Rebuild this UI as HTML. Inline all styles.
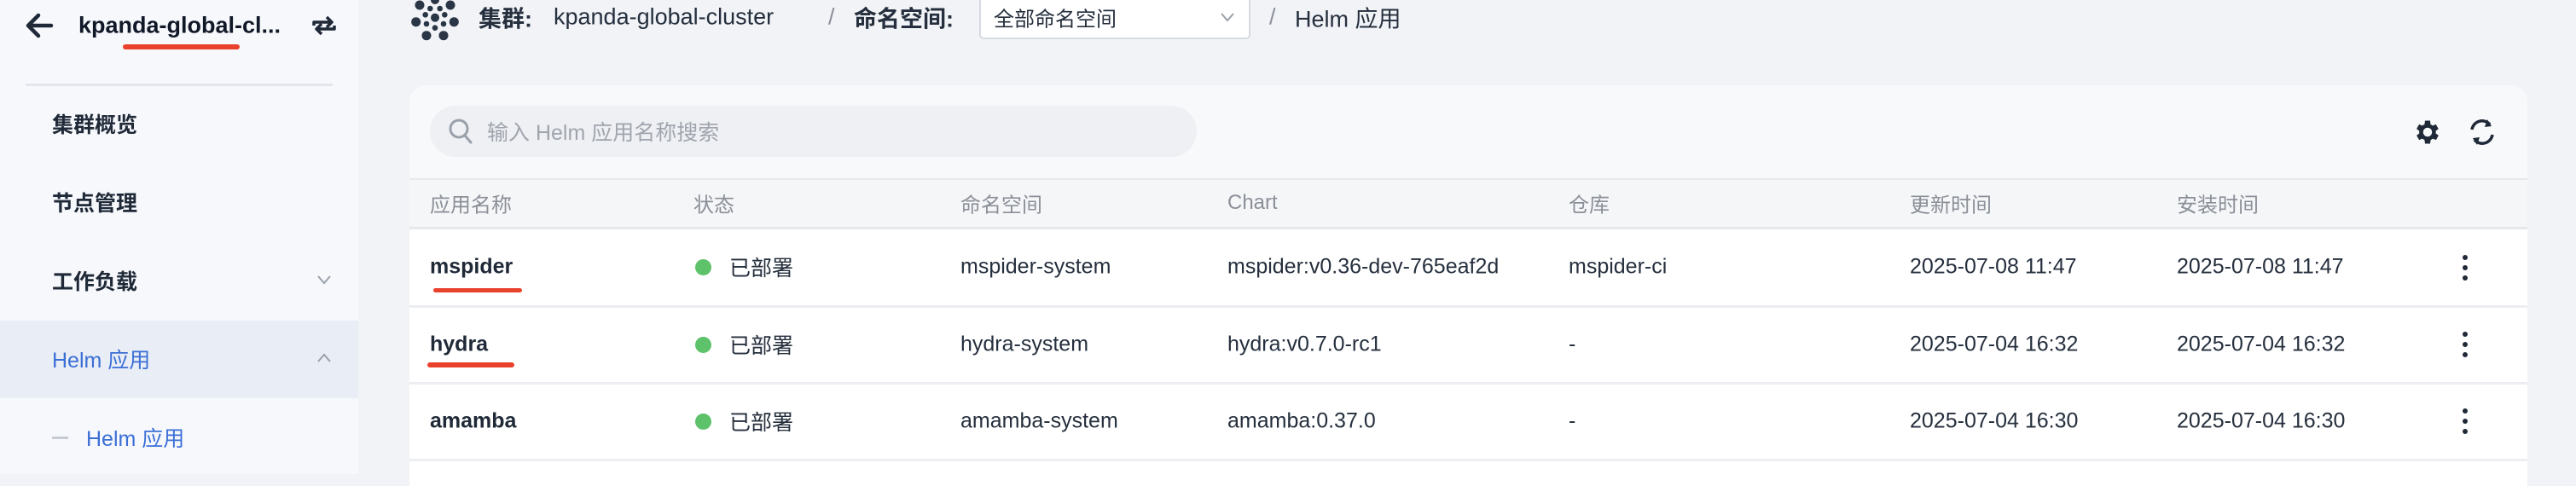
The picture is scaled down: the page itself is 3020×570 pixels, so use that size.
<!DOCTYPE html>
<html><head><meta charset="utf-8"><style>
*{margin:0;padding:0;box-sizing:border-box}
body{width:3020px;height:556px;overflow:hidden;background:#f1f3f7;font-family:"Liberation Sans","Noto Sans CJK SC",sans-serif;color:#1f2937;position:relative}
.a{position:absolute;white-space:nowrap}
.side{position:absolute;left:0;top:0;width:420px;height:556px;background:#f6f8fc}
.mi{position:absolute;left:61px;font-size:25px;font-weight:bold;color:#1f2937;transform:translateY(-50%)}
.hd{font-size:24px;color:#8b9098;transform:translateY(-50%)}
.td{font-size:25px;color:#252f3d;transform:translateY(-50%)}
.bc{font-size:27px;transform:translateY(-50%);top:20px;color:#252f3d}
.red{position:absolute;background:#e8412c;border-radius:3px}
</style></head><body>
<div class="side">
  <svg class="a" style="left:29px;top:14px" width="34" height="32" viewBox="0 0 34 32"><path d="M31 16H6M16 4L4 16l12 12" stroke="#1f2937" stroke-width="4.5" fill="none" stroke-linecap="round" stroke-linejoin="round"/></svg>
  <div class="a" style="left:92px;top:30px;transform:translateY(-50%);font-size:27px;font-weight:bold;color:#111827">kpanda-global-cl...</div>
  <svg class="a" style="left:364px;top:16px" width="32" height="28" viewBox="0 0 32 28"><path d="M4 14V10h20M19 4l6 6-6 6M28 14v4H8M13 24l-6-6 6-6" stroke="#1f2937" stroke-width="3.5" fill="none" stroke-linejoin="round"/></svg>
  <div class="red" style="left:144px;top:52px;width:137px;height:6px"></div>
  <div class="a" style="left:30px;top:98px;width:360px;height:3px;background:#e3e6ec"></div>
  <div class="mi" style="top:145px">集群概览</div>
  <div class="mi" style="top:237px">节点管理</div>
  <div class="mi" style="top:329px">工作负载</div>
  <svg class="a" style="left:371px;top:321px" width="18" height="14" viewBox="0 0 18 14"><path d="M2 3l7 8 7-8" stroke="#9aa0aa" stroke-width="2" fill="none"/></svg>
  <div class="a" style="left:0;top:376px;width:420px;height:91px;background:#e9edf5"></div>
  <div class="mi" style="top:421px;color:#3b6fd6;font-weight:normal">Helm 应用</div>
  <svg class="a" style="left:371px;top:413px" width="18" height="14" viewBox="0 0 18 14"><path d="M2 11l7-8 7 8" stroke="#9aa0aa" stroke-width="2" fill="none"/></svg>
  <div class="a" style="left:61px;top:512px;width:19px;height:3px;background:#c5cad3"></div>
  <div class="mi" style="left:101px;top:513px;color:#3b6fd6;font-weight:normal">Helm 应用</div>
</div>
<svg class="a" style="left:470px;top:0" width="100" height="60" viewBox="0 0 100 60" fill="#2a3546">
<circle cx="40" cy="0" r="5"/><circle cx="22" cy="6" r="5.5"/><circle cx="58" cy="6" r="5.5"/><circle cx="17.7" cy="25.7" r="5.5"/><circle cx="62.3" cy="25.7" r="5.5"/><circle cx="30" cy="41.7" r="5.5"/><circle cx="50" cy="41.7" r="5.5"/>
<circle cx="34.3" cy="10" r="3.3"/><circle cx="45.7" cy="10" r="3.3"/><circle cx="28.7" cy="17.3" r="3.3"/><circle cx="51.3" cy="17.3" r="3.3"/><circle cx="40" cy="20.7" r="5"/><circle cx="30" cy="28" r="3.3"/><circle cx="50" cy="28" r="3.3"/><circle cx="40" cy="32.7" r="3.3"/>
</svg>
<div class="a bc" style="left:561px;font-weight:bold">集群:</div>
<div class="a bc" style="left:649px">kpanda-global-cluster</div>
<div class="a bc" style="left:971px;color:#8b9098">/</div>
<div class="a bc" style="left:1001px;font-weight:bold">命名空间:</div>
<div class="a" style="left:1148px;top:0;width:318px;height:46px;background:#fff;border:2px solid #d6dae1;border-top:none;border-radius:0 0 5px 5px"></div>
<div class="a" style="left:1165px;top:20px;transform:translateY(-50%);font-size:24px;color:#252f3d">全部命名空间</div>
<svg class="a" style="left:1430px;top:14px" width="18" height="12" viewBox="0 0 18 12"><path d="M2 2l7 8 7-8" stroke="#9aa0aa" stroke-width="2" fill="none"/></svg>
<div class="a bc" style="left:1488px;color:#8b9098">/</div>
<div class="a bc" style="left:1518px">Helm 应用</div>

<div class="a" style="left:480px;top:100px;width:2483px;height:470px;background:#fff;border-radius:20px 20px 0 0;overflow:hidden">
  <div class="a" style="left:0;top:0;width:100%;height:109px;background:#f8f9fb"></div>
  <div class="a" style="left:24px;top:24px;width:899px;height:60px;background:#eef0f4;border-radius:30px"></div>
  <svg class="a" style="left:45px;top:38px" width="32" height="34" viewBox="0 0 32 34"><circle cx="13" cy="13" r="10" stroke="#9aa0aa" stroke-width="3" fill="none"/><path d="M20 21l7 8" stroke="#9aa0aa" stroke-width="3" stroke-linecap="round"/></svg>
  <div class="a hd" style="left:91px;top:54px;font-size:25px;color:#a0a5ad">输入 Helm 应用名称搜索</div>
  <svg class="a" style="left:2348px;top:37px" width="36" height="36" viewBox="0 0 24 24"><path fill="#1f2937" d="M19.4 13a7.5 7.5 0 000-2l2.1-1.6-2-3.5-2.5 1a7 7 0 00-1.7-1L15 3h-4l-.4 2.9a7 7 0 00-1.7 1l-2.5-1-2 3.5L6.5 11a7.5 7.5 0 000 2l-2.1 1.6 2 3.5 2.5-1a7 7 0 001.7 1L11 21h4l.4-2.9a7 7 0 001.7-1l2.5 1 2-3.5zM13 15.5a3.5 3.5 0 110-7 3.5 3.5 0 010 7z" transform="translate(-1 0)"/></svg>
  <svg class="a" style="left:2410px;top:36px" width="40" height="38" viewBox="0 0 40 38"><path d="M8 16a12 12 0 0121-6M32 22a12 12 0 01-21 6" stroke="#1f2937" stroke-width="3.5" fill="none"/><path d="M26 4l5 8-8 1zM14 34l-5-8 8-1z" fill="#1f2937"/></svg>
  <div class="a" style="left:0;top:109px;width:100%;height:60px;background:#f5f6f8;border-top:2px solid #e6e8ec;border-bottom:3px solid #e6e8ec"></div>
  <div class="a hd" style="left:24px;top:138px">应用名称</div>
  <div class="a hd" style="left:333px;top:138px">状态</div>
  <div class="a hd" style="left:646px;top:138px">命名空间</div>
  <div class="a hd" style="left:959px;top:138px">Chart</div>
  <div class="a hd" style="left:1359px;top:138px">仓库</div>
  <div class="a hd" style="left:1759px;top:138px">更新时间</div>
  <div class="a hd" style="left:2072px;top:138px">安装时间</div>

  <div class="a" style="left:0;top:258px;width:100%;height:3px;background:#eceef2"></div>
  <div class="a" style="left:0;top:348px;width:100%;height:3px;background:#eceef2"></div>
  <div class="a" style="left:0;top:438px;width:100%;height:3px;background:#eceef2"></div>

  <div class="a td" style="left:24px;top:213px;font-weight:bold;color:#1f2937">mspider</div>
  <div class="red" style="left:28px;top:238px;width:104px;height:5px"></div>
  <div class="a" style="left:335px;top:204px;width:19px;height:19px;border-radius:50%;background:#5ec26a"></div>
  <div class="a td" style="left:375px;top:213px">已部署</div>
  <div class="a td" style="left:646px;top:213px">mspider-system</div>
  <div class="a td" style="left:959px;top:213px">mspider:v0.36-dev-765eaf2d</div>
  <div class="a td" style="left:1359px;top:213px">mspider-ci</div>
  <div class="a td" style="left:1759px;top:213px">2025-07-08 11:47</div>
  <div class="a td" style="left:2072px;top:213px">2025-07-08 11:47</div>

  <div class="a td" style="left:24px;top:304px;font-weight:bold;color:#1f2937">hydra</div>
  <div class="red" style="left:21px;top:325px;width:102px;height:6px"></div>
  <div class="a" style="left:335px;top:295px;width:19px;height:19px;border-radius:50%;background:#5ec26a"></div>
  <div class="a td" style="left:375px;top:304px">已部署</div>
  <div class="a td" style="left:646px;top:304px">hydra-system</div>
  <div class="a td" style="left:959px;top:304px">hydra:v0.7.0-rc1</div>
  <div class="a td" style="left:1359px;top:304px">-</div>
  <div class="a td" style="left:1759px;top:304px">2025-07-04 16:32</div>
  <div class="a td" style="left:2072px;top:304px">2025-07-04 16:32</div>

  <div class="a td" style="left:24px;top:394px;font-weight:bold;color:#1f2937">amamba</div>
  <div class="a" style="left:335px;top:385px;width:19px;height:19px;border-radius:50%;background:#5ec26a"></div>
  <div class="a td" style="left:375px;top:394px">已部署</div>
  <div class="a td" style="left:646px;top:394px">amamba-system</div>
  <div class="a td" style="left:959px;top:394px">amamba:0.37.0</div>
  <div class="a td" style="left:1359px;top:394px">-</div>
  <div class="a td" style="left:1759px;top:394px">2025-07-04 16:30</div>
  <div class="a td" style="left:2072px;top:394px">2025-07-04 16:30</div>

  <svg class="a" style="left:2404px;top:198px" width="12" height="34" viewBox="0 0 12 34" fill="#1f2937"><circle cx="6" cy="4" r="3"/><circle cx="6" cy="16" r="3"/><circle cx="6" cy="28" r="3"/></svg>
  <svg class="a" style="left:2404px;top:288px" width="12" height="34" viewBox="0 0 12 34" fill="#1f2937"><circle cx="6" cy="4" r="3"/><circle cx="6" cy="16" r="3"/><circle cx="6" cy="28" r="3"/></svg>
  <svg class="a" style="left:2404px;top:378px" width="12" height="34" viewBox="0 0 12 34" fill="#1f2937"><circle cx="6" cy="4" r="3"/><circle cx="6" cy="16" r="3"/><circle cx="6" cy="28" r="3"/></svg>
</div>
</body></html>
